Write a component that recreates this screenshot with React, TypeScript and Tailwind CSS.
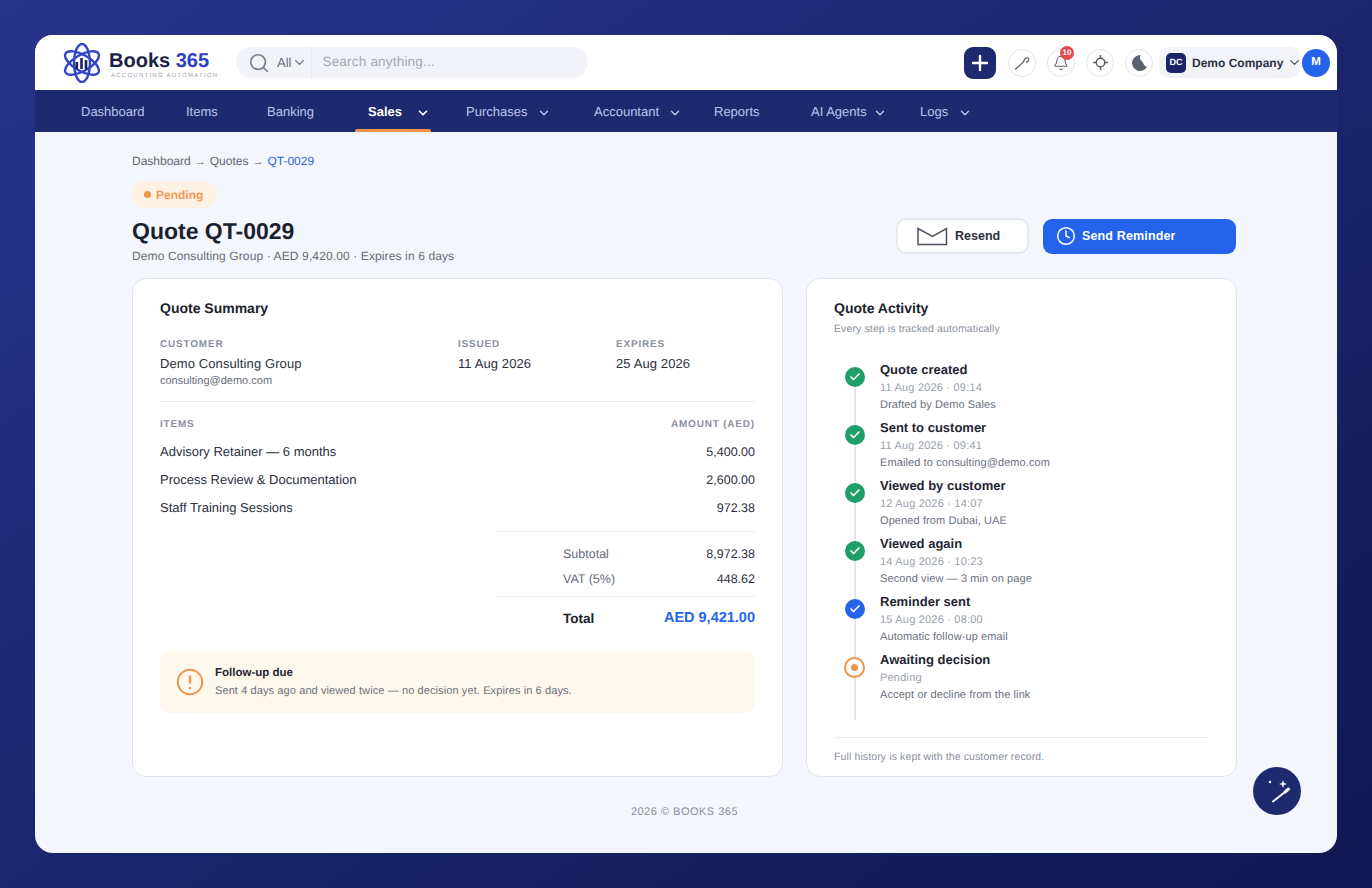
import React from "react";
import { Check, Clock, Plus, Search, ChevronDown, Bell } from "lucide-react";

const nav: [string, number, boolean, number][] = [
  ["Dashboard", 105, false, 0],
  ["Items", 81, false, 0],
  ["Banking", 101, false, 0],
  ["Sales", 98, true, 14],
  ["Purchases", 128, true, 10],
  ["Accountant", 120, true, 9],
  ["Reports", 97, false, 0],
  ["AI Agents", 109, true, 6],
  ["Logs", 70, true, 10],
];

const items = [
  ["Advisory Retainer — 6 months", "5,400.00"],
  ["Process Review & Documentation", "2,600.00"],
  ["Staff Training Sessions", "972.38"],
];

const steps = [
  ["Quote created", "11 Aug 2026 · 09:14", "Drafted by Demo Sales", "g"],
  ["Sent to customer", "11 Aug 2026 · 09:41", "Emailed to consulting@demo.com", "g"],
  ["Viewed by customer", "12 Aug 2026 · 14:07", "Opened from Dubai, UAE", "g"],
  ["Viewed again", "14 Aug 2026 · 10:23", "Second view — 3 min on page", "g"],
  ["Reminder sent", "15 Aug 2026 · 08:00", "Automatic follow-up email", "b"],
  ["Awaiting decision", "Pending", "Accept or decline from the link", "o"],
];

function Logo() {
  return (
    <svg width="38" height="40" viewBox="0 0 38 40" fill="none" stroke="#3344c4" strokeWidth="2.4">
      <ellipse cx="19" cy="20" rx="8" ry="19" />
      <ellipse cx="19" cy="20" rx="8" ry="19" transform="rotate(60 19 20)" />
      <ellipse cx="19" cy="20" rx="8" ry="19" transform="rotate(120 19 20)" />
      <g fill="#1b2559" stroke="none">
        <rect x="12.5" y="19" width="2.6" height="7" />
        <rect x="17.2" y="15" width="2.6" height="11" />
        <rect x="21.7" y="17" width="2.6" height="9" />
      </g>
    </svg>
  );
}

function Round({ children }: { children: React.ReactNode }) {
  return (
    <div className="relative flex h-[28px] w-[28px] items-center justify-center rounded-full border border-[#e2e4ec] bg-white text-[#5b6170]">
      {children}
    </div>
  );
}

function Step({ s, last }: { s: string[]; last: boolean }) {
  return (
    <div className="relative flex h-[58px] gap-[15px]">
      <div className="relative flex w-[21px] shrink-0 justify-center pt-[5px]">
        <div className={`absolute left-[9.5px] top-[14px] w-[2px] bg-[#e3e5f0] ${last ? "h-[54px]" : "h-[60px]"}`} />
        {s[3] === "o" ? (
          <div className="relative flex h-[21px] w-[21px] items-center justify-center rounded-full border-2 border-[#f0954a] bg-white">
            <div className="h-[7px] w-[7px] rounded-full bg-[#ea954f]" />
          </div>
        ) : (
          <div className={`relative flex h-[20px] w-[20px] items-center justify-center rounded-full ${s[3] === "g" ? "bg-[#1f9d6b]" : "bg-[#2563eb]"}`}>
            <Check size={12} strokeWidth={3.4} className="text-white" />
          </div>
        )}
      </div>
      <div>
        <div className="text-[13px] leading-[16px] font-bold text-[#1f2433]">{s[0]}</div>
        <div className="mt-[3px] text-[11px] leading-[15px] tracking-[0.2px] text-[#9a9fac]">{s[1]}</div>
        <div className="mt-[1px] text-[11px] leading-[16px] tracking-[0.1px] text-[#6b7080]">{s[2]}</div>
      </div>
    </div>
  );
}

export default function App() {
  return (
    <div className="h-[888px] w-[1372px] overflow-hidden bg-gradient-to-br from-[#27348a] to-[#0f1852] p-[35px] font-['Liberation_Sans',Arial,sans-serif] [text-rendering:geometricPrecision]">
      <div className="relative flex h-[818px] w-[1302px] flex-col overflow-hidden rounded-[18px] bg-[#f4f6fd]">
        <header className="flex h-[55px] shrink-0 items-center bg-white pl-[28px]">
          <Logo />
          <div className="ml-[8px] mt-[4px] w-[112px]">
            <div className="text-[20px] leading-[22px] font-bold text-[#1b2045]">
              Books <span className="text-[#2f3fc0]">365</span>
            </div>
            <div className="ml-[2px] text-[6px] leading-[8px] tracking-[1.25px] whitespace-nowrap text-[#9a9fac]">ACCOUNTING AUTOMATION</div>
          </div>
          <div className="ml-[15px] flex h-[31px] w-[352px] items-center rounded-full bg-[#f1f3f9] pl-[12px]">
            <Search size={22} strokeWidth={1.9} className="shrink-0 text-[#7a8194]" />
            <span className="ml-[7px] text-[13px] text-[#6b7080]">All</span>
            <ChevronDown size={15} className="ml-[1px] shrink-0 text-[#6b7080]" />
            <div className="ml-[4px] h-[31px] w-px bg-[#e6e8f0]" />
            <span className="ml-[10px] text-[13.5px] tracking-[0.2px] text-[#a3a8b6]">Search anything...</span>
          </div>
          <div className="ml-auto flex items-center pr-[7px]">
            <div className="flex h-[32px] w-[32px] items-center justify-center rounded-[9px] bg-[#1e2a6f]">
              <Plus size={24} strokeWidth={2.4} className="text-white" />
            </div>
            <div className="ml-[12px]">
              <Round>
                <svg width="18" height="18" viewBox="0 0 18 18" fill="none" stroke="currentColor" strokeWidth="1.3" strokeLinecap="round">
                  <path d="M2.5 15 L10.5 8 C11 6 12.5 3 15 4 C16.5 5 15.5 7.5 13.5 8" />
                </svg>
              </Round>
            </div>
            <div className="ml-[11px]">
              <Round>
                <Bell size={16} strokeWidth={1.6} />
                <span className="absolute -right-[0px] -top-[4px] flex h-[14px] w-[14px] items-center justify-center rounded-full bg-[#e5484d] text-[8px] font-bold text-white">10</span>
              </Round>
            </div>
            <div className="ml-[11px]">
              <Round>
                <svg width="17" height="17" viewBox="0 0 16 16" fill="none" stroke="currentColor" strokeWidth="1.4">
                  <circle cx="8" cy="8" r="4" />
                  <path d="M8 1v3M8 12v3M1 8h3M12 8h3" />
                </svg>
              </Round>
            </div>
            <div className="ml-[11px]">
              <Round>
                <svg width="17" height="18" viewBox="0 0 17 18">
                  <path fill="#5b6170" d="M9.5 1 A8 8 0 1 0 16 13 A6 6 0 0 1 12 8.5 A6 6 0 0 1 9.5 1Z" />
                </svg>
              </Round>
            </div>
            <div className="ml-[6px] flex h-[31px] w-[141px] items-center rounded-[10px] bg-[#f3f4f9] pl-[7px]">
              <div className="flex h-[20px] w-[20px] shrink-0 items-center justify-center rounded-[5px] bg-[#1b2468] text-[9px] font-bold text-white">DC</div>
              <span className="ml-[6px] text-[12px] font-bold whitespace-nowrap text-[#2c3040]">Demo Company</span>
              <ChevronDown size={15} className="ml-[4px] shrink-0 text-[#4b5060]" />
            </div>
            <div className="ml-[2px] flex h-[28px] w-[28px] items-center justify-center rounded-full bg-[#2563eb] text-[11.5px] font-bold text-white">M</div>
          </div>
        </header>

        <nav className="flex h-[42px] shrink-0 items-stretch bg-[#1e2a6f] pl-[33px]">
          {nav.map(([label, w, chev, gap]) => {
            const active = label === "Sales";
            return (
              <div key={label} style={{ width: w }} className="relative flex items-center pl-[13px]">
                <span className={`mt-[2px] text-[13px] ${active ? "font-bold text-white" : "text-[#bcc5ee]"}`}>{label}</span>
                {chev && <ChevronDown size={14} strokeWidth={active ? 3 : 2.4} style={{ marginLeft: gap }} className={`mt-[3px] shrink-0 ${active ? "text-white" : "text-[#bcc5ee]"}`} />}
                {active && <div className="absolute bottom-0 left-0 h-[3px] w-[76px] rounded-t-[2px] bg-[#f0954a]" />}
              </div>
            );
          })}
        </nav>

        <main className="relative flex-1 pl-[97px] pr-[100px] pt-[21px]">
          <div className="flex h-[16px] items-center text-[12px] leading-[16px] text-[#626777]">
            Dashboard <span className="mx-[4px] mt-[2px] text-[11px] leading-[14px]">→</span> Quotes <span className="mx-[4px] mt-[2px] text-[11px] leading-[14px]">→</span> <span className="text-[#2f63d8]">QT-0029</span>
          </div>
          <div className="mt-[12px] flex h-[27px] w-[85px] items-center rounded-full bg-[#fdf1e4] pl-[12px] text-[12px] font-bold text-[#ee9a55]">
            <span className="mr-[5px] h-[7px] w-[7px] rounded-full bg-[#ee954f]" />
            Pending
          </div>
          <div className="mt-[10px] flex items-start justify-between">
            <div>
              <h1 className="text-[23px] leading-[27px] font-bold text-[#1b1f2e]">Quote QT-0029</h1>
              <p className="mt-[3px] text-[12px] leading-[16px] tracking-[0.12px] text-[#666b7a]">Demo Consulting Group · AED 9,420.00 · Expires in 6 days</p>
            </div>
            <div className="flex items-center gap-[14px] pr-px">
              <button className="flex h-[36px] w-[133px] items-center rounded-[10px] border-2 border-[#e6e8f0] bg-white pl-[19px] text-[12.5px] font-bold text-[#2c3040]">
                <svg width="31" height="19" viewBox="0 0 31 19" fill="none" stroke="#4b5060" strokeWidth="1.5">
                  <path d="M1 1.5 V17.5 H29.5 V1.5 L15.5 9.5 Z" />
                </svg>
                <span className="ml-[7px]">Resend</span>
              </button>
              <button className="flex h-[35px] w-[193px] items-center rounded-[9px] bg-[#2563eb] pl-[13px] text-[12.5px] font-bold tracking-[0.15px] text-white">
                <Clock size={20} strokeWidth={1.8} />
                <span className="ml-[6px]">Send Reminder</span>
              </button>
            </div>
          </div>

          <div className="mt-[14px] flex h-[499px] gap-[23px]">
            <section className="w-[651px] shrink-0 rounded-[14px] border border-[#e2e4ec] bg-white px-[27px] pt-[20px]">
              <h2 className="text-[14px] leading-[18px] font-bold text-[#1b1f2e]">Quote Summary</h2>
              <div className="mt-[22px] flex">
                <div className="w-[298px]">
                  <div className="text-[10px] leading-[12px] font-bold tracking-[0.8px] text-[#8a8f9e]">CUSTOMER</div>
                  <div className="mt-[4px] text-[13px] leading-[18px] tracking-[0.1px] text-[#2c3040]">Demo Consulting Group</div>
                  <div className="text-[11px] leading-[16px] text-[#666b7a]">consulting@demo.com</div>
                </div>
                <div className="w-[158px]">
                  <div className="text-[10px] leading-[12px] font-bold tracking-[0.8px] text-[#8a8f9e]">ISSUED</div>
                  <div className="mt-[4px] text-[13px] leading-[18px] tracking-[0.1px] text-[#2c3040]">11 Aug 2026</div>
                </div>
                <div>
                  <div className="text-[10px] leading-[12px] font-bold tracking-[0.8px] text-[#8a8f9e]">EXPIRES</div>
                  <div className="mt-[4px] text-[13px] leading-[18px] tracking-[0.1px] text-[#2c3040]">25 Aug 2026</div>
                </div>
              </div>
              <div className="mt-[12px] h-px bg-[#e8eaf0]" />
              <div className="mt-[17px] flex justify-between text-[10px] leading-[12px] font-bold tracking-[0.8px] text-[#8a8f9e]">
                <span>ITEMS</span>
                <span>AMOUNT (AED)</span>
              </div>
              <div className="mt-[7px]">
                {items.map(([a, b]) => (
                  <div key={a} className="flex h-[28px] items-center justify-between text-[13px] text-[#2c3040]">
                    <span>{a}</span>
                    <span className="text-[12.5px]">{b}</span>
                  </div>
                ))}
              </div>
              <div className="ml-auto mt-[9px] w-[260px]">
                <div className="h-px bg-[#e8eaf0]" />
                <div className="mt-[10px] flex h-[25px] items-center justify-between pl-[68px] text-[12.5px] text-[#2c3040]">
                  <span className="text-[#666b7a]">Subtotal</span>
                  <span>8,972.38</span>
                </div>
                <div className="flex h-[25px] items-center justify-between pl-[68px] text-[12.5px] text-[#2c3040]">
                  <span className="text-[#666b7a]">VAT (5%)</span>
                  <span>448.62</span>
                </div>
                <div className="mt-[4px] h-px bg-[#e8eaf0]" />
                <div className="mt-[10px] flex h-[24px] items-center justify-between pl-[68px]">
                  <span className="text-[13.5px] font-bold text-[#1b1f2e]">Total</span>
                  <span className="text-[14.5px] font-bold text-[#2563eb]">AED 9,421.00</span>
                </div>
              </div>
              <div className="mt-[20px] flex h-[62px] items-center rounded-[10px] bg-[#fff8ec] pl-[16px]">
                <svg width="28" height="28" viewBox="0 0 28 28" fill="none" stroke="#ee954f" strokeWidth="2">
                  <circle cx="14" cy="14" r="12.2" />
                  <path d="M14 7.5 V15.5 M14 19 V21" strokeWidth="2.4" />
                </svg>
                <div className="ml-[11px]">
                  <div className="text-[11.5px] leading-[16px] font-bold text-[#1f2433]">Follow-up due</div>
                  <div className="mt-[2px] text-[11px] leading-[16px] tracking-[0.1px] text-[#6b7080]">Sent 4 days ago and viewed twice — no decision yet. Expires in 6 days.</div>
                </div>
              </div>
            </section>

            <section className="flex flex-1 flex-col rounded-[14px] border border-[#e2e4ec] bg-white px-[27px] pt-[20px]">
              <h2 className="text-[14px] leading-[18px] font-bold text-[#1b1f2e]">Quote Activity</h2>
              <p className="mt-[5px] text-[10.5px] leading-[14px] tracking-[0.12px] text-[#8a8f9e]">Every step is tracked automatically</p>
              <div className="ml-[10px] mt-[26px]">
                {steps.map((s, i) => (
                  <Step key={s[0]} s={s} last={i === steps.length - 1} />
                ))}
              </div>
              <div className="mt-[27px] h-px bg-[#e8eaf0]" />
              <p className="mt-[12px] text-[10.5px] leading-[14px] tracking-[0.12px] text-[#8a8f9e]">Full history is kept with the customer record.</p>
            </section>
          </div>

          <footer className="mt-[28px] text-center text-[11px] leading-[14px] tracking-[0.5px] text-[#8a8f9e]">2026 © BOOKS 365</footer>

          <div className="absolute bottom-[38px] right-[36px] flex h-[48px] w-[48px] items-center justify-center rounded-full bg-[#1e2a6f]">
            <svg width="28" height="28" viewBox="0 0 28 28" fill="white" stroke="none">
              <path d="M10 24.5 L22 15" stroke="white" strokeWidth="2" strokeLinecap="round" />
              <path d="M22 15 L25.5 12" stroke="white" strokeWidth="3" strokeLinecap="round" />
              <path d="M20 3 L21 6 L24 7 L21 8 L20 11 L19 8 L16 7 L19 6 Z" />
              <circle cx="7" cy="5" r="1.2" />
            </svg>
          </div>
        </main>
      </div>
    </div>
  );
}
